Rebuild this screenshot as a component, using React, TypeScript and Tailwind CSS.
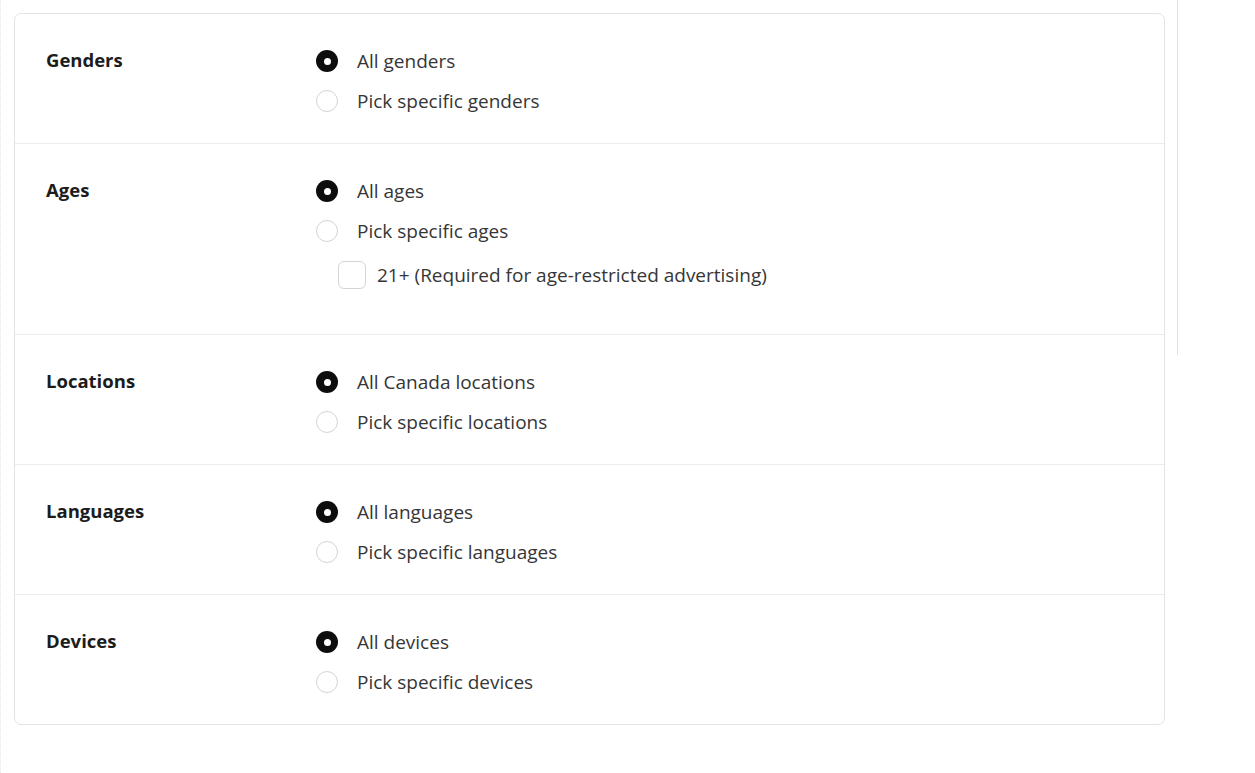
import React from "react";

type Section = {
  label: string;
  options: { text: string; selected: boolean }[];
  checkbox?: string;
};

const SECTIONS: Section[] = [
  {
    label: "Genders",
    options: [
      { text: "All genders", selected: true },
      { text: "Pick specific genders", selected: false },
    ],
  },
  {
    label: "Ages",
    options: [
      { text: "All ages", selected: true },
      { text: "Pick specific ages", selected: false },
    ],
    checkbox: "21+ (Required for age-restricted advertising)",
  },
  {
    label: "Locations",
    options: [
      { text: "All Canada locations", selected: true },
      { text: "Pick specific locations", selected: false },
    ],
  },
  {
    label: "Languages",
    options: [
      { text: "All languages", selected: true },
      { text: "Pick specific languages", selected: false },
    ],
  },
  {
    label: "Devices",
    options: [
      { text: "All devices", selected: true },
      { text: "Pick specific devices", selected: false },
    ],
  },
];

function Radio({ selected }: { selected: boolean }) {
  if (selected) {
    return (
      <span className="flex h-[22px] w-[22px] shrink-0 items-center justify-center rounded-full bg-[#0d0d0d]">
        <span className="h-[7px] w-[7px] rounded-full bg-white" />
      </span>
    );
  }
  return <span className="h-[22px] w-[22px] shrink-0 rounded-full border-[1.5px] border-[#d4d4d4] bg-white" />;
}

function SectionRow({ section }: { section: Section }) {
  return (
    <div className="flex border-b border-[#ececec] pb-[22px] pl-[31px] pt-[27px] last:border-b-0">
      <div className="w-[270px] shrink-0 text-[18.5px] font-bold leading-[37px] text-[#1c1c1c]">{section.label}</div>
      <div className="flex flex-col">
        {section.options.map((opt) => (
          <label key={opt.text} className="flex h-[40px] items-center gap-[19px] text-[19px] text-[#363636]">
            <Radio selected={opt.selected} />
            {opt.text}
          </label>
        ))}
        {section.checkbox && (
          <label className="ml-[22px] flex h-[61px] items-start gap-[11px] pt-[10px] text-[19px] text-[#363636]">
            <span className="h-[28px] w-[28px] shrink-0 rounded-[6px] border-[1.5px] border-[#d4d4d4] bg-white" />
            <span className="leading-[28px]">{section.checkbox}</span>
          </label>
        )}
      </div>
    </div>
  );
}

export default function App() {
  return (
    <div
      className="flex h-[773px] w-[1255px] items-start border-l border-dotted border-[#e6e6e6] bg-white"
      style={{ fontFamily: '"Open Sans", "Noto Sans", sans-serif' }}
    >
      <div className="ml-[13px] mt-[13px] w-[1151px] rounded-[7px] border border-[#e3e3e3] bg-white">
        {SECTIONS.map((s) => (
          <SectionRow key={s.label} section={s} />
        ))}
      </div>
      <div className="ml-[12px] h-[355px] border-l-[1.5px] border-[#e2e2e2]" />
    </div>
  );
}
